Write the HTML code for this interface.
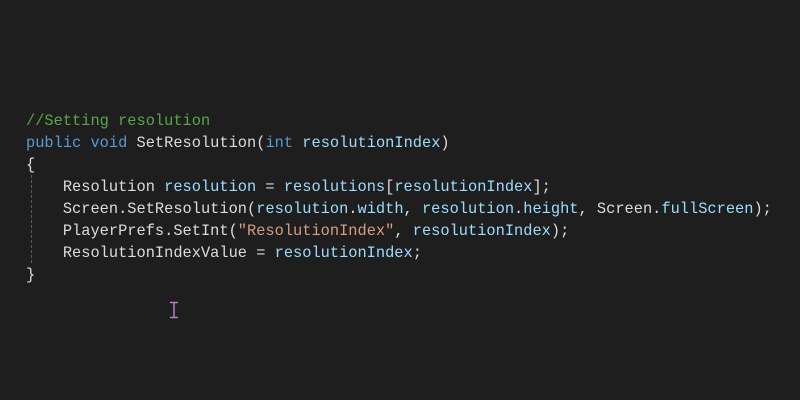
<!DOCTYPE html><html><head><style>
body{margin:0;background:#1e1e1e;width:800px;height:400px;overflow:hidden;position:relative}
pre{position:absolute;left:26px;top:110px;margin:0;font-family:"Liberation Mono",monospace;font-size:15.35px;line-height:22px;color:#dcdcdc}
.c{color:#57a64a}.k{color:#569cd6}.f{color:#dcdcaa}.v{color:#9cdcfe}.s{color:#d69d85}
.g{position:absolute;left:31px;top:175px;height:88px;border-left:1px dashed #5a5a5a}
</style></head><body>
<div class="g"></div>
<pre><span class="c">//Setting resolution</span>
<span class="k">public</span> <span class="k">void</span> SetResolution(<span class="k">int</span> <span class="v">resolutionIndex</span>)
{
    Resolution <span class="v">resolution</span> = <span class="v">resolutions</span>[<span class="v">resolutionIndex</span>];
    Screen.SetResolution(<span class="v">resolution</span>.<span class="v">width</span>, <span class="v">resolution</span>.<span class="v">height</span>, Screen.<span class="v">fullScreen</span>);
    PlayerPrefs.SetInt(<span class="s">"ResolutionIndex"</span>, <span class="v">resolutionIndex</span>);
    ResolutionIndexValue = <span class="v">resolutionIndex</span>;
}</pre>
<svg style="position:absolute;left:168px;top:301px" width="12" height="18"><path d="M2 1.5H10M6 1.5V16.5M2 16.5H10" stroke="#b37fc0" stroke-width="1.5" fill="none"/></svg>
</body></html>
